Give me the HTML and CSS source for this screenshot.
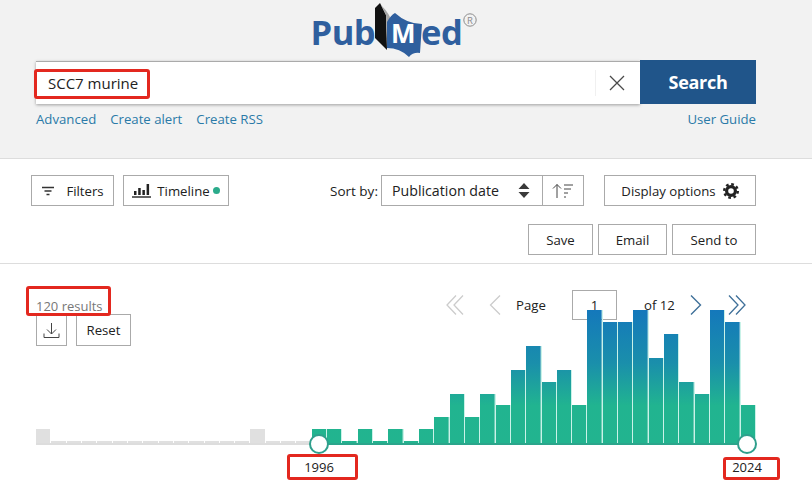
FILE: index.html
```html
<!DOCTYPE html>
<html lang="en">
<head>
<meta charset="utf-8">
<title>PubMed</title>
<link rel="stylesheet" href="styles.css">
</head>
<body>
<header class="masthead">
  <svg class="logo" width="170" height="60" viewBox="0 0 170 60">
    <text class="logo-word" x="-1.5" y="45">Pub</text>
    <path d="M63 8 L68 3 L74 15 L75 50 L63 38 Z" fill="#111"/>
    <path d="M69 5 Q78 14 81 24 L75 40 L74 15 Z" fill="#a6a6a6"/>
    <path d="M75 48 L75 22 Q79 15 83 13 Q95 24 110 24 L108 53 Q101 52 97 57 Q88 48 75 48 Z" fill="#2f5f9e"/>
    <text class="logo-m" x="79" y="43">M</text>
    <text class="logo-word" x="109" y="45">ed</text>
    <circle cx="158" cy="20" r="6.2" fill="none" stroke="#8c8c8c" stroke-width="1"/>
    <text class="logo-r" x="155" y="23.5">R</text>
  </svg>
  <form class="search">
    <div class="search-box">
      <span class="search-text">SCC7 murine</span>
      <span class="search-divider"></span>
      <svg class="search-clear" width="18" height="18" viewBox="0 0 18 18"><path d="M2 2 L16 16 M16 2 L2 16" stroke="#4a4a4a" stroke-width="1.3" fill="none"/></svg>
    </div>
    <button class="search-go" type="button">Search</button>
  </form>
  <nav class="search-links">
    <a class="link">Advanced</a>
    <a class="link">Create alert</a>
    <a class="link">Create RSS</a>
    <a class="link link-end">User Guide</a>
  </nav>
</header>

<section class="tools">
  <div class="tools-row">
    <button class="btn btn-filters" type="button">
      <svg width="14" height="10" viewBox="0 0 14 10"><path d="M1 1.5 H13 M3.5 5 H10.5 M5.5 8.5 H8.5" stroke="#333" stroke-width="1.4"/></svg>
      <span>Filters</span>
    </button>
    <button class="btn btn-timeline" type="button">
      <svg width="19" height="15" viewBox="0 0 19 15"><path d="M0 14 H19" stroke="#222" stroke-width="1.4"/><path d="M2 8 H4.5 V12 H2 Z M6.2 5 H8.7 V12 H6.2 Z M10.4 7 H12.9 V12 H10.4 Z M14.6 1 H17.1 V12 H14.6 Z" fill="#222"/></svg>
      <span>Timeline</span>
      <i class="dot"></i>
    </button>
    <span class="sort-label">Sort by:</span>
    <div class="sort">
      <span class="sort-select">Publication date
        <svg width="12" height="15" viewBox="0 0 12 15"><path d="M6 0 L11.5 6 H0.5 Z M6 15 L11.5 9 H0.5 Z" fill="#3a3a3a"/></svg>
      </span>
      <span class="sort-order">
        <svg width="22" height="16" viewBox="0 0 22 16"><path d="M5 15 V1.5 M1 5.5 L5 1.5 L9 5.5 M12 2 H21 M12 6 H19 M12 10 H16 M12 14 H14" stroke="#444" stroke-width="1" fill="none"/></svg>
      </span>
    </div>
    <button class="btn btn-display" type="button">
      <span>Display options</span>
      <svg width="16" height="16" viewBox="0 0 16 16"><circle cx="8" cy="8" r="4.4" fill="none" stroke="#222" stroke-width="3.2"/><circle cx="8" cy="8" r="6.8" fill="none" stroke="#222" stroke-width="2.4" stroke-dasharray="2.7 2.64"/></svg>
    </button>
  </div>
  <div class="actions-row">
    <button class="btn btn-save" type="button">Save</button>
    <button class="btn btn-email" type="button">Email</button>
    <button class="btn btn-send" type="button">Send to</button>
  </div>
</section>

<section class="results">
  <div class="results-left">
    <div class="count">120 results</div>
    <div class="chart-tools">
      <button class="btn btn-download" type="button" aria-label="Download">
        <svg width="17" height="17" viewBox="0 0 17 17"><path d="M8.5 1 V12 M4 7.5 L8.5 12 L13 7.5 M1 11.5 V15.5 H16 V11.5" stroke="#444" stroke-width="1" fill="none"/></svg>
      </button>
      <button class="btn btn-reset" type="button">Reset</button>
    </div>
  </div>
  <div class="pager">
    <svg class="pg-first" width="18" height="20" viewBox="0 0 18 20"><path d="M10 0.5 L1 10 L10 19.5 M17 0.5 L8 10 L17 19.5" stroke="#ccc" stroke-width="1.3" fill="none"/></svg>
    <svg class="pg-prev" width="12" height="20" viewBox="0 0 12 20"><path d="M11 0.5 L1.5 10 L11 19.5" stroke="#ccc" stroke-width="1.3" fill="none"/></svg>
    <span class="pg-page">Page</span>
    <span class="pg-input">1</span>
    <span class="pg-of">of 12</span>
    <svg class="pg-next" width="12" height="20" viewBox="0 0 12 20"><path d="M1 0.5 L10.5 10 L1 19.5" stroke="#3f7099" stroke-width="1.4" fill="none"/></svg>
    <svg class="pg-last" width="18" height="20" viewBox="0 0 18 20"><path d="M1 0.5 L10 10 L1 19.5 M8 0.5 L17 10 L8 19.5" stroke="#3f7099" stroke-width="1.3" fill="none"/></svg>
  </div>

  <div class="chart">
    <div class="bars">
      <i class="bar off" style="height:14px"></i><i class="bar off" style="height:2px"></i><i class="bar off" style="height:2px"></i><i class="bar off" style="height:2px"></i><i class="bar off" style="height:2px"></i><i class="bar off" style="height:2px"></i><i class="bar off" style="height:2px"></i><i class="bar off" style="height:2px"></i><i class="bar off" style="height:2px"></i><i class="bar off" style="height:2px"></i><i class="bar off" style="height:2px"></i><i class="bar off" style="height:2px"></i><i class="bar off" style="height:2px"></i><i class="bar off" style="height:2px"></i><i class="bar off" style="height:14px"></i><i class="bar off" style="height:2px"></i><i class="bar off" style="height:2px"></i><i class="bar off" style="height:2px"></i>
      <i class="bar" style="height:14px"></i><i class="bar" style="height:14px"></i><i class="bar" style="height:2px"></i><i class="bar" style="height:14px"></i><i class="bar" style="height:2px"></i><i class="bar" style="height:14px"></i><i class="bar" style="height:2px"></i><i class="bar" style="height:14px"></i><i class="bar" style="height:26px"></i><i class="bar" style="height:49px"></i><i class="bar" style="height:26px"></i><i class="bar" style="height:49px"></i><i class="bar" style="height:38px"></i><i class="bar" style="height:73px"></i><i class="bar" style="height:97px"></i><i class="bar" style="height:61px"></i><i class="bar" style="height:73px"></i><i class="bar" style="height:38px"></i><i class="bar" style="height:133px"></i><i class="bar" style="height:121px"></i><i class="bar" style="height:121px"></i><i class="bar" style="height:133px"></i><i class="bar" style="height:85px"></i><i class="bar" style="height:109px"></i><i class="bar" style="height:61px"></i><i class="bar" style="height:49px"></i><i class="bar" style="height:133px"></i><i class="bar" style="height:121px"></i><i class="bar" style="height:38px"></i>
    </div>
    <div class="track"><span class="track-off"></span><span class="track-on"></span></div>
    <i class="handle handle-start"></i>
    <i class="handle handle-end"></i>
    <span class="year year-start">1996</span>
    <span class="year year-end">2024</span>
  </div>

  <i class="mark mark-count"></i>
  <i class="mark mark-start"></i>
  <i class="mark mark-end"></i>
</section>
<i class="mark mark-term"></i>
</body>
</html>
```

FILE: styles.css
```css
* { box-sizing: border-box; }

html, body { margin: 0; padding: 0; }

body {
  position: relative;
  width: 812px;
  height: 492px;
  overflow: hidden;
  background: #fff;
  color: #212121;
  font-family: "Open Sans", "Noto Sans", sans-serif;
  font-size: 13.2px;
}

.masthead {
  height: 159px;
  background: #f2f2f2;
  border-bottom: 1px solid #ddd;
  padding: 0 56px 0 36px;
}

.logo { display: block; margin-left: 276px; }
.logo-word { font: 700 34.5px "Open Sans", sans-serif; fill: #2f5f9e; letter-spacing: -0.5px; }
.logo-m { font: 700 26px "Open Sans", sans-serif; fill: #fff; }
.logo-r { font: 400 9.5px "Open Sans", sans-serif; fill: #8c8c8c; }

.search { display: flex; height: 44px; }

.search-box {
  flex: 1;
  display: flex;
  align-items: center;
  height: 43px;
  margin-top: 1px;
  padding-left: 12px;
  background: #fff;
  border-top: 1px solid #aaa;
  box-shadow: 0 1px 3px rgba(0,0,0,.35);
}

.search-text { flex: 1; font-size: 15px; color: #222; }
.search-divider { width: 1px; height: 26px; background: #f0f0f0; }
.search-clear { margin: 0 14px 0 12px; }

.search-go {
  width: 116px;
  border: 0;
  background: #20558a;
  color: #fff;
  font: 700 18px "Open Sans", sans-serif;
  letter-spacing: -0.3px;
}

.search-links { display: flex; gap: 14px; margin-top: 6px; line-height: 18px; }
.link { color: #2a7aa8; font-size: 13.2px; }
.link-end { margin-left: auto; }

.tools { height: 105px; padding: 16px 56px 0 31px; border-bottom: 1px solid #ddd; }
.tools-row { display: flex; align-items: center; height: 31px; }
.actions-row { display: flex; justify-content: flex-end; gap: 5px; margin-top: 18px; height: 31px; }

.btn {
  display: inline-flex;
  align-items: center;
  justify-content: center;
  height: 31px;
  padding: 0;
  background: #fff;
  border: 1px solid #aaa;
  color: #212121;
  font: 13.2px "Open Sans", sans-serif;
}

.btn-filters { width: 83px; gap: 11px; }
.btn-timeline { width: 106px; margin-left: 9px; gap: 6px; }
.dot { width: 7px; height: 7px; border-radius: 50%; background: #2bab8b; margin-left: -3px; }
.sort-label { margin-left: 101px; width: 51px; white-space: nowrap; font-size: 13.5px; }

.sort { display: flex; height: 31px; border: 1px solid #aaa; }
.sort-select {
  display: flex;
  align-items: center;
  justify-content: space-between;
  width: 161px;
  padding: 0 12px 0 10px;
  font-size: 14.2px;
  border-right: 1px solid #aaa;
}
.sort-order { display: flex; align-items: center; justify-content: center; width: 40px; }

.btn-display { width: 152px; margin-left: 20px; gap: 7px; }
.btn-save { width: 65px; }
.btn-email { width: 69px; }
.btn-send { width: 84px; }

.results { position: relative; height: 228px; padding: 0 56px 0 36px; display: flex; justify-content: space-between; }

.results-left { padding-top: 34px; }
.count { height: 16px; line-height: 16px; color: #777; font-size: 13px; white-space: nowrap; }
.chart-tools { display: flex; gap: 9px; }
.btn-download { width: 31px; height: 32px; }
.btn-reset { width: 55px; height: 32px; }

.pager { display: flex; align-items: center; height: 31px; margin-top: 25px; padding-right: 10px; }
.pg-prev { margin-left: 25px; }
.pg-page { margin-left: 15px; width: 56px; }
.pg-input { width: 45px; height: 30px; border: 1px solid #aaa; text-align: center; line-height: 28px; }
.pg-of { margin-left: 27px; width: 46px; white-space: nowrap; }
.pg-last { margin-left: 26px; }

.chart { position: absolute; left: 36px; top: 46px; width: 720px; height: 160px; }
.bars { display: grid; grid-template-columns: repeat(47, 1fr); align-items: end; height: 133px; }
.bar {
  display: block;
  margin-right: 1px;
  background: linear-gradient(#1478bb 0%, #1a8fab 40%, #21b490 72%, #22b48f 100%) bottom / 100% 133px no-repeat;
  box-shadow: 1px 0 0 #c9f2e8;
}
.bar.off { background: #e0e0e0; box-shadow: none; }

.track { display: flex; height: 2px; }
.track-off { width: 283px; background: #ddd; }
.track-on { flex: 1; background: #2ba58b; }

.handle {
  position: absolute;
  top: 124px;
  width: 20px;
  height: 20px;
  border-radius: 50%;
  background: #fff;
  border: 2.5px solid #2f9f8c;
}
.handle-start { left: 273px; }
.handle-end { left: 701px; }

.year { position: absolute; top: 148px; width: 50px; text-align: center; font-size: 13px; line-height: 18px; }
.year-start { left: 258px; }
.year-end { left: 686px; }

.mark { position: absolute; display: block; border: 3px solid #e3281f; border-radius: 3px; }
.mark-term { left: 34px; top: 69px; width: 116px; height: 30px; }
.mark-count { left: 26px; top: 22px; width: 85px; height: 30px; }
.mark-start { left: 287px; top: 190px; width: 71px; height: 26px; }
.mark-end { left: 723px; top: 193px; width: 57px; height: 23px; }
```
